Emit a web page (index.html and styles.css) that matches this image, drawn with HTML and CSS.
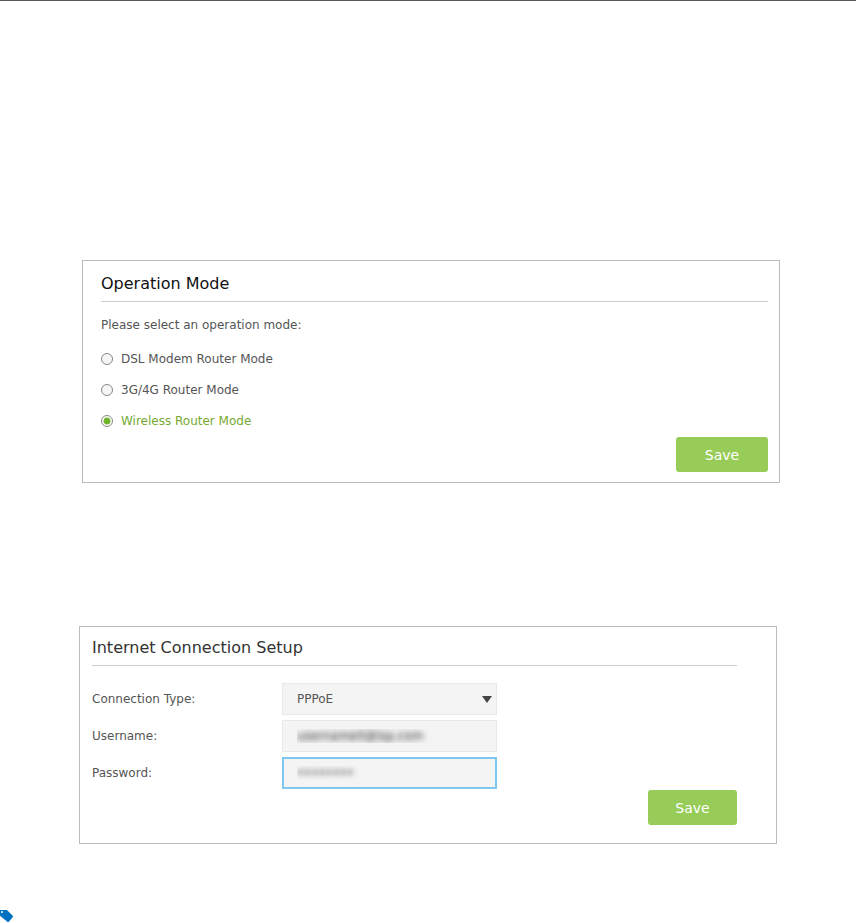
FILE: index.html
```html
<!DOCTYPE html>
<html lang="en">
<head>
    <meta charset="UTF-8">
    <meta name="viewport" content="width=device-width, initial-scale=1.0">
    <title>Operation Mode</title>
    <link rel="stylesheet" href="styles.css">
</head>
<body>
    <main>
        <form class="panel mode">
            <h2>Operation Mode</h2>
            <p id="mode-label">Please select an operation mode:</p>
            <div class="options" role="radiogroup" aria-labelledby="mode-label">
                <label><input type="radio" name="mode" value="dsl"> DSL Modem Router Mode</label>
                <label><input type="radio" name="mode" value="mobile"> 3G/4G Router Mode</label>
                <label><input type="radio" name="mode" value="wireless" checked> Wireless Router Mode</label>
            </div>
            <button type="button">Save</button>
        </form>

        <form class="panel setup">
            <h2>Internet Connection Setup</h2>
            <div class="fields">
                <label for="type">Connection Type:</label>
                <div class="select">
                    <select id="type">
                        <option>PPPoE</option>
                    </select>
                    <svg width="12" height="8" viewBox="0 0 12 8" aria-hidden="true"><path d="M1 1h10L6 8z" fill="#444"/></svg>
                </div>
                <label for="username">Username:</label>
                <input class="hidden-value" type="text" id="username" value="username0@isp.com">
                <label for="password">Password:</label>
                <input class="hidden-value active" type="password" id="password" value="password">
            </div>
            <button type="button">Save</button>
        </form>
    </main>

    <footer>
        <svg width="14" height="14" viewBox="0 0 14 14" aria-hidden="true">
            <path d="M0 1h6q1 0 1.500.500L12.500 6.500q1 1 0 2L9 12.500q-1 1-2 0L0 6.800z" fill="#0070c0"/>
            <circle cx="2" cy="3" r="1" fill="#fff"/>
        </svg>
    </footer>
</body>
</html>
```

FILE: styles.css
```css
* {
    box-sizing: border-box;
}
body {
    font-family: "DejaVu Sans", Verdana, sans-serif;
    font-size: 12px;
    line-height: 16px;
    background-color: #fff;
    color: #555;
    border-top: 1px solid #58585a;
    margin: 0;
}
main {
    padding: 259px 76px 0 79px;
}
.panel {
    display: flex;
    flex-direction: column;
    border: 1px solid #bbb;
}
h2 {
    font-size: 16px;
    font-weight: normal;
    line-height: 24px;
    margin: 0;
    border-bottom: 1px solid #ccc;
}
button {
    align-self: flex-end;
    width: 92px;
    height: 35px;
    padding: 0;
    border: none;
    border-radius: 3px;
    background-color: #96cc57;
    color: #fff;
    font-family: inherit;
    font-size: 14px;
    cursor: pointer;
}

/* Operation mode */
.mode {
    margin-left: 3px;
    padding: 11px 11px 10px 18px;
}
.mode h2 {
    color: #111;
    padding-bottom: 5px;
}
.mode p {
    margin: 15px 0 18px;
}
.options {
    display: flex;
    flex-direction: column;
    align-items: flex-start;
    gap: 15px;
    margin-bottom: 8px;
}
.options label {
    display: flex;
    align-items: center;
    gap: 8px;
}
.options label:has(:checked) {
    color: #76a932;
}
.options input {
    appearance: none;
    width: 12px;
    height: 12px;
    margin: 0;
    border: 1px solid #888;
    border-radius: 50%;
    background-color: #f6f6f6;
}
.options input:checked {
    background: radial-gradient(circle, #6fb52c 0 3px, #fff 4px);
}

/* Internet connection */
.setup {
    margin: 143px 3px 0 0;
    padding: 9px 39px 18px 12px;
}
.setup h2 {
    color: #333;
    padding-bottom: 5px;
}
.fields {
    display: grid;
    grid-template-columns: 190px 215px;
    align-items: center;
    row-gap: 5px;
    margin: 17px 0 1px;
}
.select {
    position: relative;
}
.select svg {
    position: absolute;
    top: 12px;
    right: 4px;
    pointer-events: none;
}
.fields select,
.fields input {
    display: block;
    appearance: none;
    width: 100%;
    height: 32px;
    padding: 0 14px;
    border: 1px solid #e8e8e8;
    border-radius: 0;
    outline: none;
    background-color: #f4f4f4;
    color: #555;
    font-family: inherit;
    font-size: 12px;
}
/* keep the account details unreadable */
.fields .hidden-value {
    color: transparent;
    text-shadow: 0 0 5px #666, 0 0 8px #999;
}
.fields .active {
    padding: 0 13px;
    border: 2px solid #7cc8f0;
}
.setup button {
    width: 89px;
}

footer {
    margin-top: 65px;
}
footer svg {
    display: block;
}
```
